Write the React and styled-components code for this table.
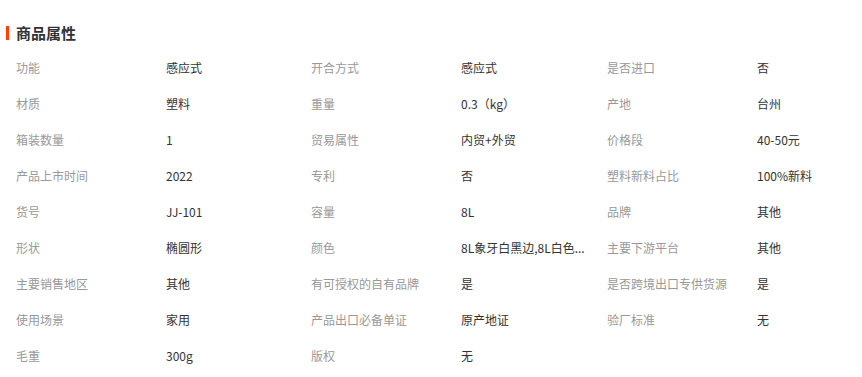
import styled, { createGlobalStyle } from "styled-components";

const GlobalStyle = createGlobalStyle`
    body {
        margin: 0;
        background: #fff;
        font-family: "Microsoft YaHei", "Noto Sans CJK SC", sans-serif;
    }
`;

const attrs = [
    ["功能", "感应式"], ["开合方式", "感应式"], ["是否进口", "否"],
    ["材质", "塑料"], ["重量", "0.3（kg）"], ["产地", "台州"],
    ["箱装数量", "1"], ["贸易属性", "内贸+外贸"], ["价格段", "40-50元"],
    ["产品上市时间", "2022"], ["专利", "否"], ["塑料新料占比", "100%新料"],
    ["货号", "JJ-101"], ["容量", "8L"], ["品牌", "其他"],
    ["形状", "椭圆形"], ["颜色", "8L象牙白黑边,8L白色..."], ["主要下游平台", "其他"],
    ["主要销售地区", "其他"], ["有可授权的自有品牌", "是"], ["是否跨境出口专供货源", "是"],
    ["使用场景", "家用"], ["产品出口必备单证", "原产地证"], ["验厂标准", "无"],
    ["毛重", "300g"], ["版权", "无"],
];

const App = () => {
    return (
        <Wrapper>
            <GlobalStyle />
            <Title>商品属性</Title>
            <Grid>
                {attrs.map(([label, value]) => (
                    <Pair key={label}>
                        <Label>{label}</Label>
                        <Value>{value}</Value>
                    </Pair>
                ))}
            </Grid>
        </Wrapper>
    );
};

export default App;

const Wrapper = styled.div`
    width: 862px;
    padding-top: 23px;
`;

const Title = styled.h3`
    position: relative;
    margin: 0 0 6px 16px;
    font-size: 15px;
    line-height: 20px;
    font-weight: bold;
    color: #333;

    &::before {
        content: "";
        position: absolute;
        left: -10px;
        top: 3px;
        width: 3px;
        height: 14px;
        background: #ff4000;
    }
`;

const Grid = styled.div`
    display: grid;
    grid-template-columns: 295px 296px 1fr;
    padding-left: 16px;
`;

const Pair = styled.div`
    display: grid;
    grid-template-columns: 150px 1fr;
    height: 36px;
    align-items: center;
    font-size: 12px;
`;

const Label = styled.span`
    color: #999;
    white-space: nowrap;
`;

const Value = styled.span`
    color: #333;
    white-space: nowrap;
`;
